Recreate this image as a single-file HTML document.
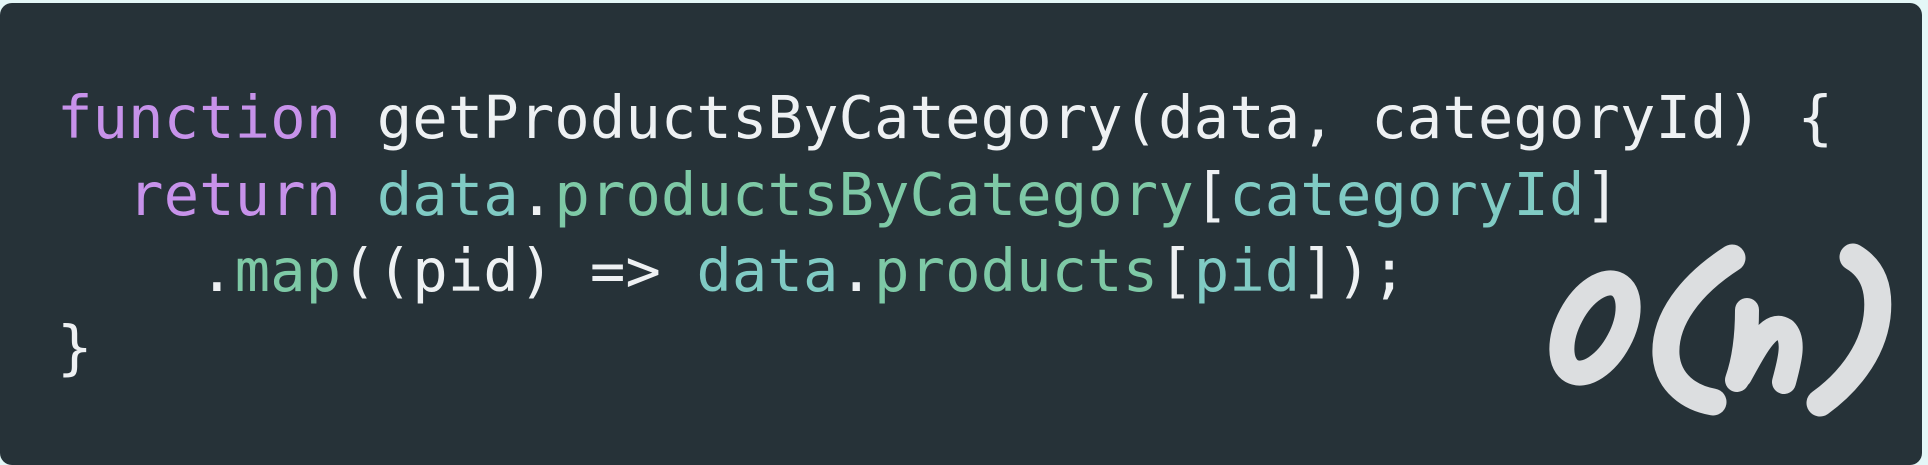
<!DOCTYPE html>
<html><head><meta charset="utf-8"><style>
html,body{margin:0;padding:0;width:1928px;height:462px;background:#e4f7f7;overflow:hidden}
.card{position:absolute;left:0;top:3px;width:1922px;height:462px;background:#263238;border-radius:12px}
pre{position:absolute;left:57px;top:80px;margin:0;font-family:"DejaVu Sans Mono","Liberation Mono",monospace;font-size:59px;line-height:76.5px;color:#eef1f3}
.k{color:#c792ea}.d{color:#80cbc4}.p{color:#7ec9a6}
svg{position:absolute;left:0;top:0}
</style></head><body>
<div class="card"></div>
<pre><span class="k">function</span> getProductsByCategory(data, categoryId) {
  <span class="k">return</span> <span class="d">data</span>.<span class="p">productsByCategory</span>[<span class="d">categoryId</span>]
    .<span class="p">map</span>((pid) =&gt; <span class="d">data</span>.<span class="p">products</span>[<span class="d">pid</span>]);
}</pre>
<svg width="1928" height="462" viewBox="0 0 1928 462">
<g fill="none" stroke="#dcdee0" stroke-linecap="round" stroke-linejoin="round">
<ellipse cx="1595" cy="328" rx="27" ry="49" transform="rotate(28 1595 328)" stroke-width="25"/>
<path d="M1732 258 C1690 285 1664 320 1666 355 C1668 383 1690 398 1713 402" stroke-width="27"/>
<path d="M1747 310 C1747 337 1744 360 1737 380" stroke-width="24"/>
<path d="M1740 376 C1757 345 1770 320 1785 330 C1795 340 1790 360 1784 382" stroke-width="24"/>
<path d="M1853 257 C1875 270 1880 292 1877 317 C1872 355 1845 385 1820 403" stroke-width="27"/>
</g>
</svg>
</body></html>
